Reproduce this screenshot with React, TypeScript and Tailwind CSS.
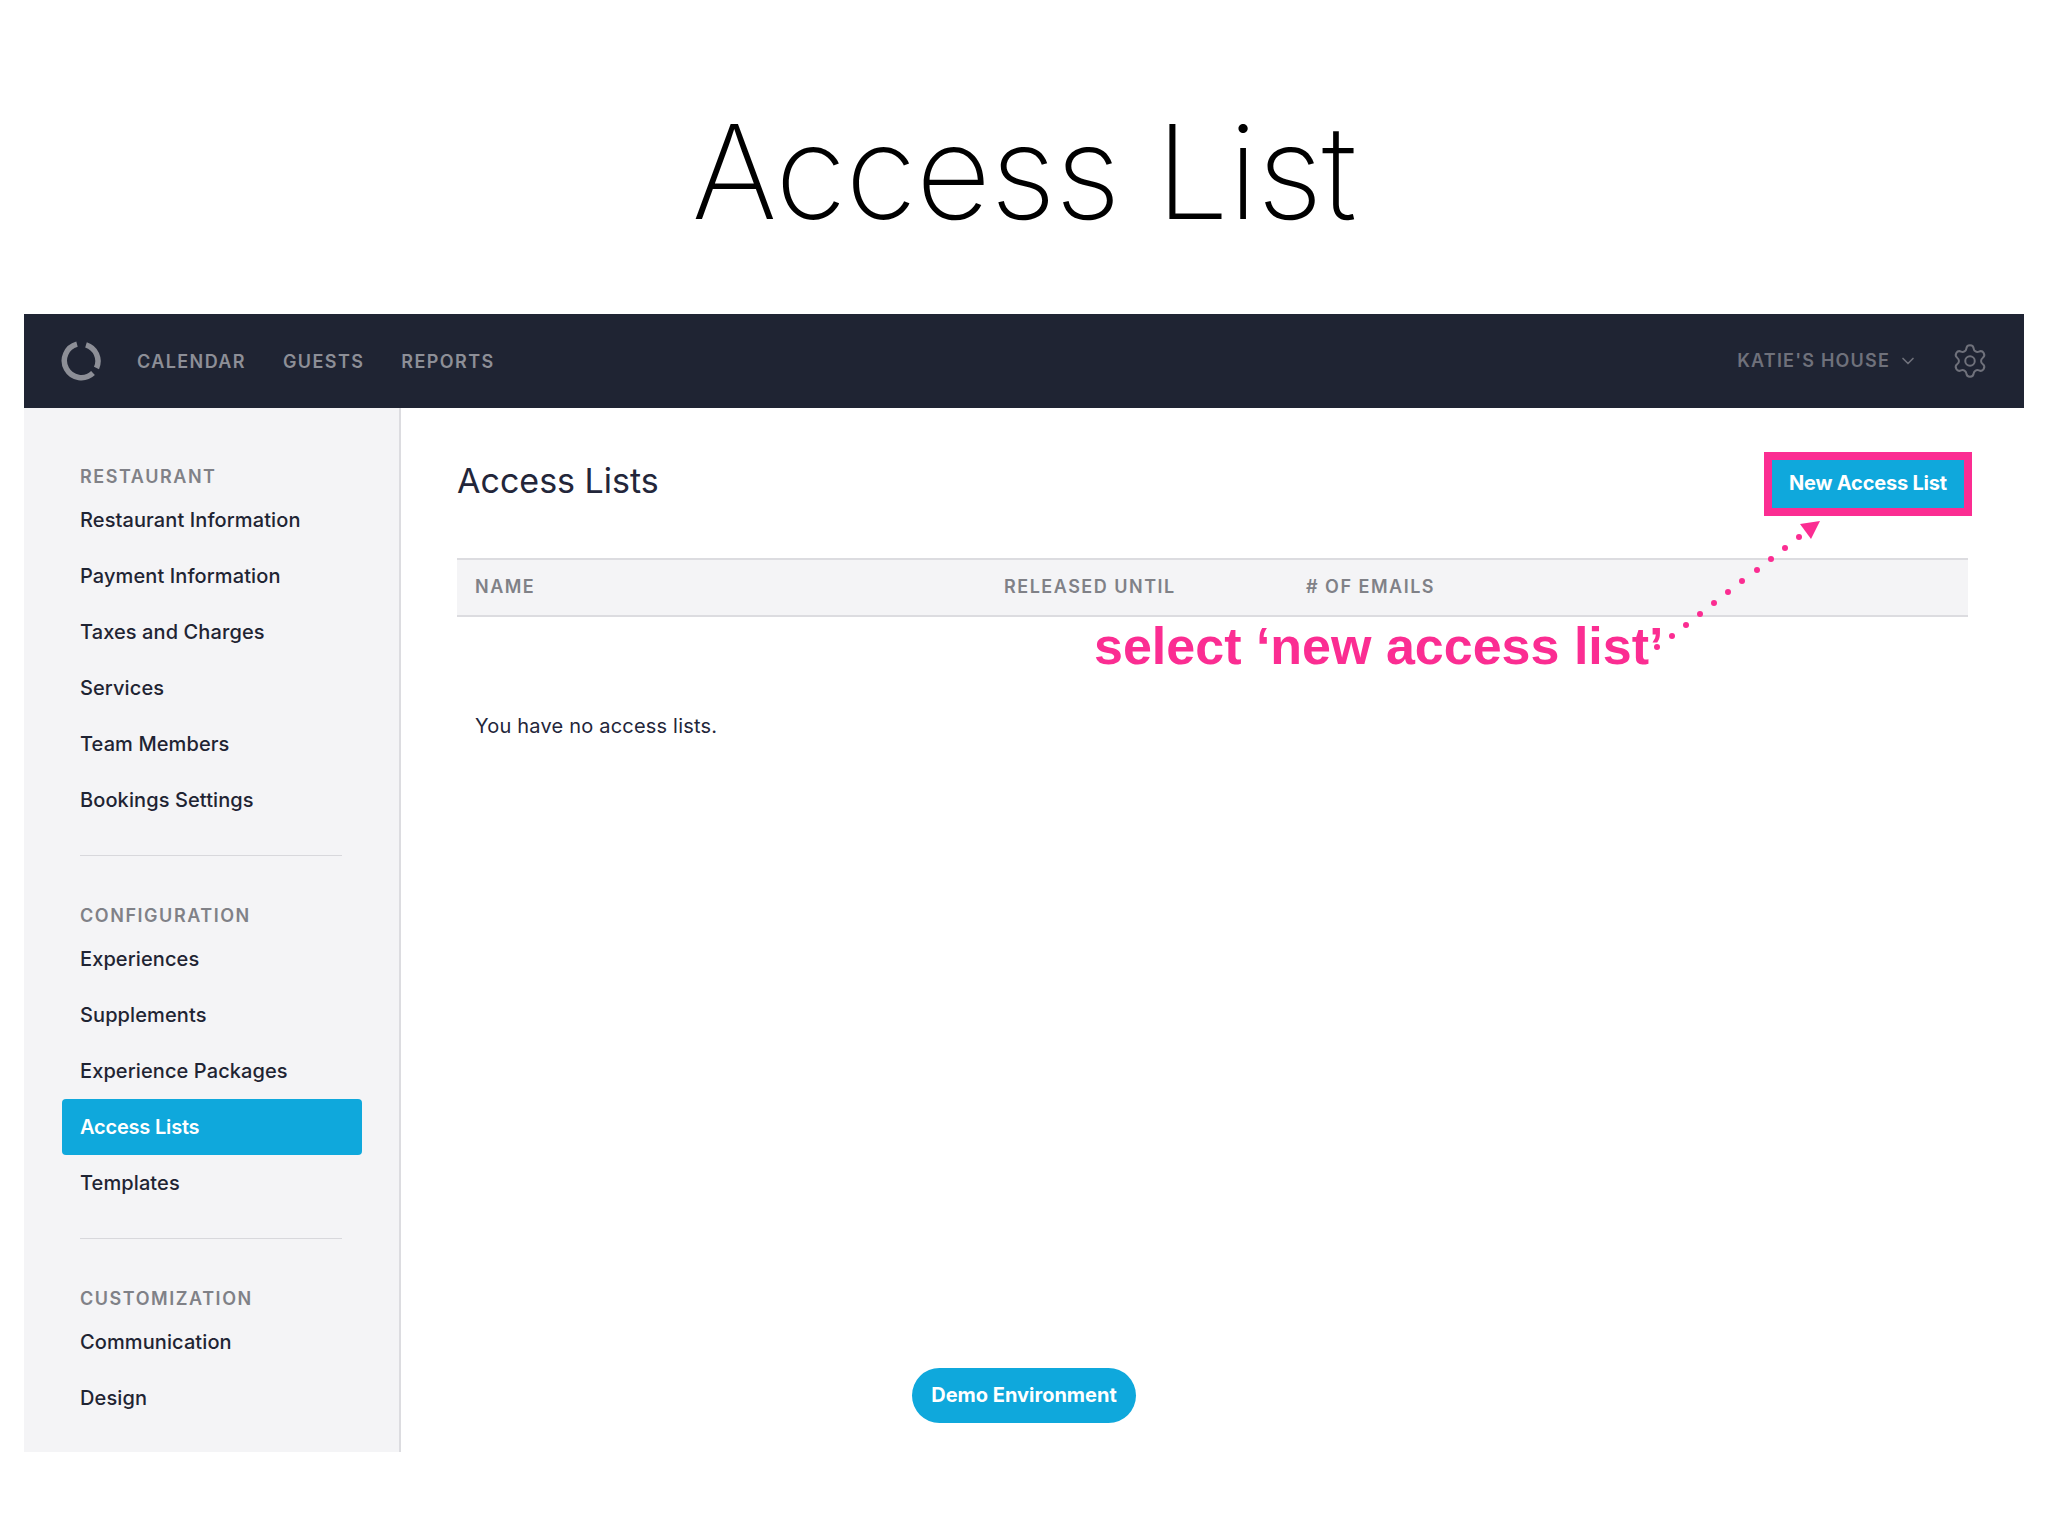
import React from "react";
import { ChevronDown, Settings } from "lucide-react";

const sections = [
  {
    title: "RESTAURANT",
    items: ["Restaurant Information", "Payment Information", "Taxes and Charges", "Services", "Team Members", "Bookings Settings"],
  },
  {
    title: "CONFIGURATION",
    items: ["Experiences", "Supplements", "Experience Packages", "Access Lists", "Templates"],
  },
  {
    title: "CUSTOMIZATION",
    items: ["Communication", "Design"],
  },
];

const dots = [
  [1657, 647],
  [1672, 636],
  [1686, 625],
  [1700, 614],
  [1714, 603],
  [1728, 592],
  [1742, 581],
  [1757, 570],
  [1771, 559],
  [1785, 548],
  [1799, 537],
];

const Logo = () => (
  <svg width="40" height="40" viewBox="0 0 40 40" fill="none" stroke="#8d8f97" strokeWidth="5.5">
    <path d="M16 3.2 A17 17 0 1 0 32 32" />
    <path d="M25 3.8 A17 17 0 0 1 35.5 27" />
  </svg>
);

const Sidebar = () => (
  <aside className="w-[377px] shrink-0 bg-[#f4f4f6] border-r-2 border-[#dcdce0] pt-[56px]">
    {sections.map((section, index) => (
      <div key={section.title}>
        {index > 0 && <div className="ml-[56px] mr-[57px] mt-[27px] mb-[47px] h-px bg-[#d8d8dc]" />}
        <div className="pl-[56px] h-[28px] pb-[3px] flex items-center text-[18px] font-semibold tracking-[1.55px] text-[#808187]">
          {section.title}
        </div>
        {section.items.map((item) =>
          item === "Access Lists" ? (
            <div
              key={item}
              className="ml-[38px] w-[300px] h-[56px] pl-[18px] flex items-center rounded-[4px] bg-[#0fa8dc] text-white text-[20px] font-semibold tracking-[-0.2px]"
            >
              {item}
            </div>
          ) : (
            <div key={item} className="pl-[56px] h-[56px] flex items-center text-[20px] font-[550] tracking-[0.1px] text-[#1f2433]">
              {item}
            </div>
          )
        )}
      </div>
    ))}
  </aside>
);

export default function App() {
  return (
    <div className="relative h-[1536px] bg-white overflow-hidden font-['Inter',sans-serif]">
      <div className="h-[314px] flex items-center justify-center pt-[29px]">
        <h1 className="font-[250] text-[130px] tracking-[-0.7px] leading-none text-black">Access List</h1>
      </div>
      <div className="mx-[24px] h-[1138px] flex flex-col">
        <header className="h-[94px] shrink-0 bg-[#1f2433] flex items-center pl-[37px] pr-[35px]">
          <Logo />
          <nav className="flex items-center gap-[37px] ml-[36px] text-[18px] font-semibold tracking-[1.4px] text-[#8d8f97]">
            <span>CALENDAR</span>
            <span>GUESTS</span>
            <span>REPORTS</span>
          </nav>
          <div className="ml-auto flex items-center text-[18px] font-semibold tracking-[1.2px] text-[#6f717b] -mt-[1px]">
            KATIE'S HOUSE
            <ChevronDown size={20} strokeWidth={2} className="ml-[8px] mr-[33px]" />
            <Settings size={38} strokeWidth={1.25} />
          </div>
        </header>
        <div className="flex-1 flex">
          <Sidebar />
          <main className="flex-1 pl-[56px] pr-[56px]">
            <div className="flex items-center justify-between pt-[44px] -mr-[4px]">
              <h2 className="text-[34px] leading-[50px] -mt-[6px] text-[#23263a]">Access Lists</h2>
              <button className="w-[208px] h-[64px] border-[8px] border-[#fb2d92] bg-[#0fa8dc] text-white text-[20px] font-bold tracking-[-0.2px] pb-[3px]">
                New Access List
              </button>
            </div>
            <div className="mt-[42px] h-[59px] flex items-center bg-[#f4f4f6] border-y-2 border-[#dcdce0] pl-[18px] pb-[2px] text-[18px] font-semibold tracking-[1.5px] text-[#808187]">
              <span className="w-[529px]">NAME</span>
              <span className="w-[302px]">RELEASED UNTIL</span>
              <span># OF EMAILS</span>
            </div>
            <p className="mt-[94px] pl-[18px] text-[20px] tracking-[0.2px] text-[#23263a]">You have no access lists.</p>
          </main>
        </div>
      </div>
      <button className="absolute left-[912px] top-[1368px] w-[224px] h-[55px] rounded-full bg-[#0fa8dc] text-white text-[20px] font-bold pb-[2px]">
        Demo Environment
      </button>
      <div className="absolute left-[1094px] top-[616px] font-['Liberation_Sans',sans-serif] font-bold text-[52px] leading-[60px] text-[#fb2d92] whitespace-nowrap">
        select ‘new access list’
      </div>
      <svg className="absolute left-0 top-0" width="2048" height="1536" fill="#fb2d92">
        {dots.map(([x, y]) => (
          <circle key={x} cx={x} cy={y} r="3" />
        ))}
        <polygon points="1800,524 1820,521 1811,539" />
      </svg>
    </div>
  );
}
